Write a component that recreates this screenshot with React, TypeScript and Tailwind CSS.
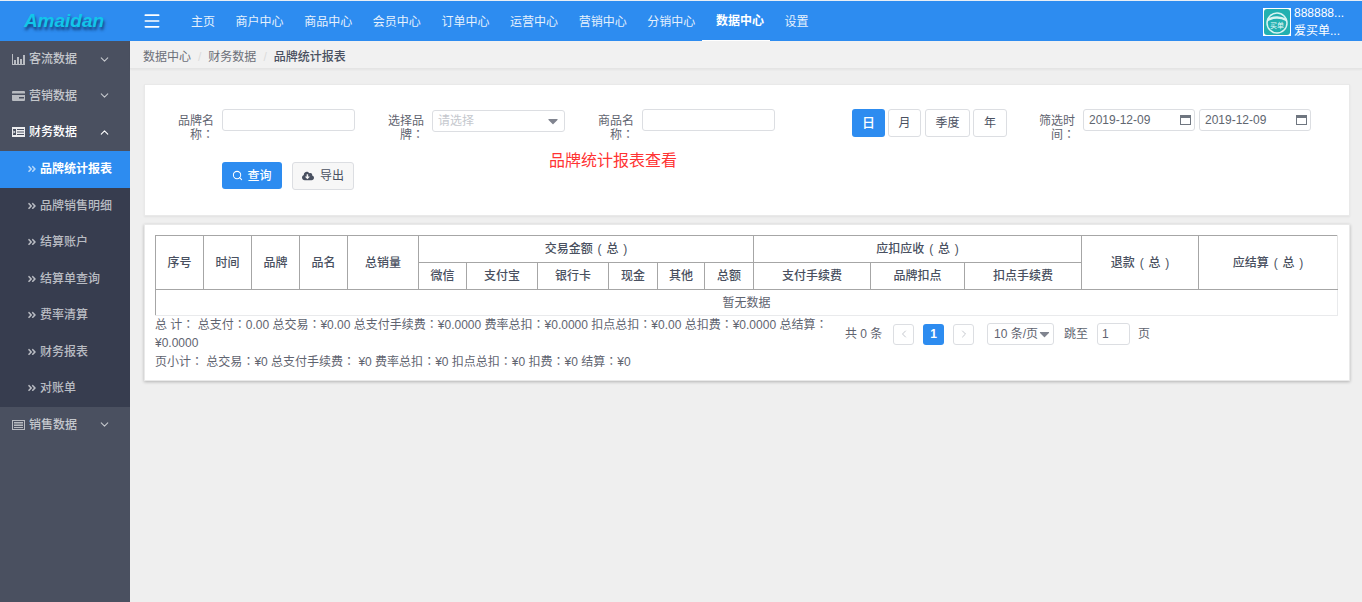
import { ChevronDown, ChevronLeft, ChevronRight, ChevronUp, Menu, Search } from "lucide-react";
import { FaAngleDoubleRight, FaCloudDownloadAlt, FaCaretDown } from "react-icons/fa";

const font = { fontFamily: '"Liberation Sans", "Noto Sans CJK SC", sans-serif' };

const navItems = ["主页", "商户中心", "商品中心", "会员中心", "订单中心", "运营中心", "营销中心", "分销中心"];
const subItems = ["品牌销售明细", "结算账户", "结算单查询", "费率清算", "财务报表", "对账单"];

// the reference sets its full-width colons centred, which is the TC glyph
function Txt({ children }: { children: string }) {
  return (
    <>
      {children.split("：").map((part, i) => (
        <span key={i}>
          {i > 0 && <span className="font-['Noto_Sans_CJK_TC'] leading-none">：</span>}
          {part}
        </span>
      ))}
    </>
  );
}

function ChartIcon() {
  return (
    <svg viewBox="0 0 13 11" className="h-[11px] w-[13px]" fill="currentColor">
      <path d="M0 0h1v10h12v1H0z" />
      <path d="M2 6h2v4H2zM5 3h2v7H5zM8 5h2v5H8zM11 1h2v9h-2z" />
    </svg>
  );
}

function CardIcon() {
  return (
    <svg viewBox="0 0 13 10" className="h-[10px] w-[13px]" fill="currentColor">
      <path d="M1 0h11a1 1 0 0 1 1 1v1.500H0V1a1 1 0 0 1 1-1zM0 4h13v5a1 1 0 0 1-1 1H1a1 1 0 0 1-1-1zm7 2v1.500h5V6z" />
    </svg>
  );
}

function LabelIcon() {
  return (
    <svg viewBox="0 0 13 10" className="h-[10px] w-[13px]" fill="currentColor">
      <path d="M0 0h13v10H0zm1 2v6h3V2zm4 0v1h7V2zm0 2.500v1h7v-1zm0 2.500v1h7V7z" fillRule="evenodd" />
      <path d="M1.500 3.500 3.500 5l-2 1.500z" />
    </svg>
  );
}

function ListIcon() {
  return (
    <svg viewBox="0 0 13 10" className="h-[10px] w-[13px]" fill="currentColor">
      <path fillRule="evenodd" d="M0 0h13v10H0zm1 1v8h11V1zm1 1h9v1.500H2zm0 2.500h9V6H2zM2 7h9v1H2z" />
    </svg>
  );
}

function CalendarIcon() {
  return (
    <svg viewBox="0 0 11 10" className="h-[10px] w-[11px]" fill="#6f7680">
      <path fillRule="evenodd" d="M0 0h11v10H0zm1 3v6h9V3z" />
    </svg>
  );
}

function SideGroup({ icon, label, open }: { icon: React.ReactNode; label: string; open?: boolean }) {
  return (
    <div className={`flex h-[36.5px] items-center pl-[12px] pr-[19px] ${open ? "text-white" : "text-[#c4c7cc]"}`}>
      <span className="flex w-[16px] opacity-90">{icon}</span>
      <span className="ml-[1px] flex-1 font-medium">{label}</span>
      {open ? <ChevronUp size={13} /> : <ChevronDown size={13} />}
    </div>
  );
}

function Sidebar() {
  return (
    <aside className="w-[130px] shrink-0 bg-[#4a5060] text-xs">
      <SideGroup icon={<ChartIcon />} label="客流数据" />
      <SideGroup icon={<CardIcon />} label="营销数据" />
      <SideGroup icon={<LabelIcon />} label="财务数据" open />
      <div className="bg-[#373d4f]">
        <div className="flex h-[37px] items-center bg-[#2d8cf0] pl-[27px] font-semibold text-white">
          <FaAngleDoubleRight className="mr-[3px] text-[10px] text-[#b5d7fa]" />
          品牌统计报表
        </div>
        {subItems.map((item) => (
          <div key={item} className="flex h-[36.5px] items-center pl-[27px] font-medium text-[#b9bcc3]">
            <FaAngleDoubleRight className="mr-[3px] text-[10px]" />
            {item}
          </div>
        ))}
      </div>
      <SideGroup icon={<ListIcon />} label="销售数据" />
    </aside>
  );
}

function Header() {
  return (
    <header className="flex h-[41px] items-center border-t border-[#e8eef5] bg-[#2d8cf0] text-xs text-white">
      <div className="flex w-[130px] justify-center pr-[2px]">
        <span className="text-[19px] font-bold italic text-[#12c6ea] [text-shadow:1px_3px_3px_#123f7a]">Amaidan</span>
      </div>
      <Menu size={20} className="ml-[12px] mr-[15px] text-white" />
      {navItems.map((item) => (
        <span key={item} className="pl-[14px] pr-[6.6px] pt-[2px] leading-[40px] text-[#e6f1fd]">
          {item}
        </span>
      ))}
      <span className="mt-[2px] border-b-2 border-white pl-[14px] pr-[6.6px] font-semibold leading-[38px] text-white">数据中心</span>
      <span className="pl-[14px] pr-[6.6px] pt-[2px] leading-[40px] text-[#e6f1fd]">设置</span>
      <div className="ml-auto flex w-[99px] items-center gap-[3px] pt-[1px]">
        <div className="flex size-[28px] items-center justify-center bg-white">
          <svg viewBox="0 0 26 26" className="size-[26px] rounded-[3px] bg-[#22b0b0]">
            <circle cx="13" cy="14" r="10" fill="none" stroke="#d8f3f1" strokeWidth="1.500" />
            <path d="M3.500 11 Q13 6 22.500 11" fill="none" stroke="#d8f3f1" strokeWidth="2.500" />
            <text x="13" y="19" fontSize="7" textAnchor="middle" fill="#eafafa">买单</text>
          </svg>
        </div>
        <div className="whitespace-nowrap leading-[18px]">
          <div>888888...</div>
          <div>爱买单...</div>
        </div>
      </div>
    </header>
  );
}

function Field({ label, children, className }: { label: string; children: React.ReactNode; className?: string }) {
  return (
    <div className={`flex items-start ${className ?? ""}`}>
      <label className="mt-[6px] w-[36px] text-right leading-[13px] text-[#5f6470]">
        <Txt>{label}</Txt>
      </label>
      <div className="ml-[8px]">{children}</div>
    </div>
  );
}

const inputCls = "h-[22px] rounded-[3px] border border-[#dcdee2] bg-white";

function DateInput() {
  return (
    <div className={`${inputCls} flex w-[112px] items-center justify-between pl-[5px] pr-[3px] text-[#606670]`}>
      2019-12-09
      <CalendarIcon />
    </div>
  );
}

function Filters() {
  return (
    <section className="mt-[15px] h-[132px] border border-[#e9e9e9] bg-white pl-[33px] pt-[24px] text-xs shadow-[0_1px_2px_rgba(0,0,0,0.06)]">
      <div className="flex h-[53px] items-start">
        <Field label="品牌名称：">
          <div className={`${inputCls} w-[133px]`} />
        </Field>
        <Field label="选择品牌：" className="ml-[33px]">
          <div className={`${inputCls} mt-[1px] flex w-[133px] items-center justify-between pl-[5px] pr-[3px] text-[#c5c8ce]`}>
            请选择
            <FaCaretDown className="text-[16px] text-[#80848f]" />
          </div>
        </Field>
        <Field label="商品名称：" className="ml-[33px]">
          <div className={`${inputCls} w-[133px]`} />
        </Field>
        <div className="ml-[77px] flex h-[28px] text-[13px] text-[#495060]">
          <span className="flex w-[33px] items-center justify-center rounded-[3px] bg-[#2d8cf0] font-medium text-white">日</span>
          <span className="ml-[3px] flex w-[33px] items-center justify-center rounded-[3px] border border-[#dcdee2] text-xs">月</span>
          <span className="ml-[4px] flex w-[45px] items-center justify-center rounded-[3px] border border-[#dcdee2] text-xs">季度</span>
          <span className="ml-[3px] flex w-[34px] items-center justify-center rounded-[3px] border border-[#dcdee2] text-xs">年</span>
        </div>
        <Field label="筛选时间：" className="ml-[32px]">
          <div className="flex gap-[4px]">
            <DateInput />
            <DateInput />
          </div>
        </Field>
      </div>
      <div className="flex items-start">
        <button className="ml-[44px] flex h-[27px] w-[60px] items-center justify-center gap-[4px] rounded-[3px] bg-[#2d8cf0] font-medium text-white">
          <Search size={11} strokeWidth={2.2} />
          查询
        </button>
        <button className="ml-[10px] flex h-[28px] w-[62px] items-center justify-center gap-[6px] rounded-[3px] border border-[#dcdee2] bg-[#f7f7f7] text-[#495060]">
          <FaCloudDownloadAlt className="text-[12px] text-[#495060]" />
          导出
        </button>
        <div className="ml-[195px] mt-[-13px] text-base leading-[24px] text-[#ff3333]">品牌统计报表查看</div>
      </div>
    </section>
  );
}

const thCls = "border border-[#a6a6a6] font-medium text-[#495060] p-0 text-center [word-spacing:1.5px]";
const colWidths = [48, 48, 48, 48, 71, 48, 71, 71, 49, 47, 49, 117, 94, 117, 117, 139];

function DataTable() {
  return (
    <table className="w-[1182px] table-fixed border-collapse text-xs">
      <colgroup>
        {colWidths.map((w, i) => (
          <col key={i} style={{ width: w }} />
        ))}
      </colgroup>
      <thead>
        <tr className="h-[27px]">
          {["序号", "时间", "品牌", "品名", "总销量"].map((t) => (
            <th key={t} rowSpan={2} className={thCls}>{t}</th>
          ))}
          <th colSpan={6} className={thCls}>交易金额 ( 总 )</th>
          <th colSpan={3} className={thCls}>应扣应收 ( 总 )</th>
          <th rowSpan={2} className={thCls}>退款 ( 总 )</th>
          <th rowSpan={2} className={`${thCls} border-r-[#e4e4e4]`}>应结算 ( 总 )</th>
        </tr>
        <tr className="h-[27px]">
          {["微信", "支付宝", "银行卡", "现金", "其他", "总额", "支付手续费", "品牌扣点", "扣点手续费"].map((t) => (
            <th key={t} className={thCls}>{t}</th>
          ))}
        </tr>
      </thead>
      <tbody>
        <tr className="h-[26px]">
          <td colSpan={16} className="border border-[#e9eaec] border-l-[#a6a6a6] border-t-[#a6a6a6] text-center text-[#5f6470]">
            暂无数据
          </td>
        </tr>
      </tbody>
    </table>
  );
}

function Pager() {
  const box = "flex size-[21px] items-center justify-center rounded-[3px] border border-[#dcdee2] text-[#c5c8ce]";
  return (
    <div className="ml-[16px] mt-[7px] flex h-[22px] items-center text-[#5f6470]">
      <span className="w-[38px] whitespace-nowrap">共 0 条</span>
      <span className={`${box} ml-[10px]`}><ChevronLeft size={12} /></span>
      <span className="ml-[9px] flex size-[21px] items-center justify-center rounded-[3px] bg-[#2d8cf0] font-bold text-white">1</span>
      <span className={`${box} ml-[9px]`}><ChevronRight size={12} /></span>
      <span className="ml-[13px] flex h-[22px] w-[67px] items-center justify-between whitespace-nowrap rounded-[3px] border border-[#dcdee2] pl-[6px] pr-[2px]">
        10 条/页
        <FaCaretDown className="text-[16px] text-[#80848f]" />
      </span>
      <span className="ml-[10px]">跳至</span>
      <span className="ml-[9px] flex h-[22px] w-[33px] items-center rounded-[3px] border border-[#dcdee2] pl-[4px]">1</span>
      <span className="ml-[8px]">页</span>
    </div>
  );
}

function TableCard() {
  return (
    <section className="mt-[8px] h-[157px] border border-[#e9e9e9] bg-white pl-[10px] pt-[10px] text-xs shadow-[0_1px_3px_rgba(0,0,0,0.25)]">
      <DataTable />
      <div className="flex">
        <div className="w-[674px] pt-[1px] leading-[17.5px] text-[#5f6470]">
          <div>
            <Txt>总 计： 总支付：0.00 总交易：¥0.00 总支付手续费：¥0.0000 费率总扣：¥0.0000 扣点总扣：¥0.00 总扣费：¥0.0000 总结算：¥0.0000</Txt>
          </div>
          <div className="mt-[2px]">
            <Txt>页小计： 总交易：¥0 总支付手续费： ¥0 费率总扣：¥0 扣点总扣：¥0 扣费：¥0 结算：¥0</Txt>
          </div>
        </div>
        <Pager />
      </div>
    </section>
  );
}

export default function App() {
  return (
    <div className="flex h-[602px] flex-col overflow-hidden bg-[#efefef]" style={font}>
      <Header />
      <div className="flex flex-1">
        <Sidebar />
        <main className="flex-1">
          <div className="flex h-[28px] items-center border-b border-[#e4e4e4] bg-[#f1f1f1] pl-[13px] pt-[4px] text-xs text-[#6c6f78] shadow-[0_1px_2px_rgba(0,0,0,0.05)]">
            数据中心
            <span className="mx-[7px] text-[#dcdcdc]">/</span>
            财务数据
            <span className="mx-[7px] text-[#dcdcdc]">/</span>
            <span className="font-medium text-[#495060]">品牌统计报表</span>
          </div>
          <div className="pl-[14px] pr-[12px]">
            <Filters />
            <TableCard />
          </div>
        </main>
      </div>
    </div>
  );
}
